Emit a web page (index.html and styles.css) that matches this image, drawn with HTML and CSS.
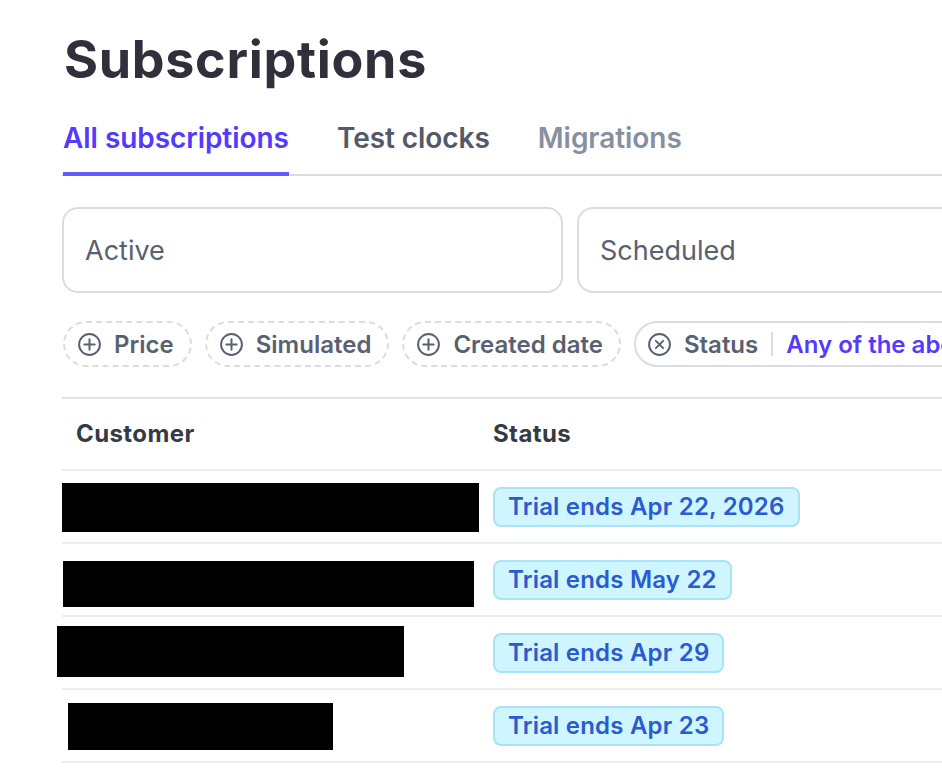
FILE: index.html
```html
<!DOCTYPE html>
<html>
<head>
<meta charset="utf-8">
<link rel="stylesheet" href="styles.css">
</head>
<body>
<div class="page">
  <h1 class="title">Subscriptions</h1>
  <nav class="tabs">
    <a class="tab active">All subscriptions</a>
    <a class="tab">Test clocks</a>
    <a class="tab muted">Migrations</a>
  </nav>
  <div class="cards">
    <div class="card">Active</div>
    <div class="card">Scheduled</div>
  </div>
  <div class="pills">
    <span class="pill dashed"><svg class="ico" viewBox="0 0 24 24"><circle cx="12" cy="12" r="10"/><path d="M12 7v10M7 12h10"/></svg>Price</span>
    <span class="pill dashed"><svg class="ico" viewBox="0 0 24 24"><circle cx="12" cy="12" r="10"/><path d="M12 7v10M7 12h10"/></svg>Simulated</span>
    <span class="pill dashed"><svg class="ico" viewBox="0 0 24 24"><circle cx="12" cy="12" r="10"/><path d="M12 7v10M7 12h10"/></svg>Created date</span>
    <span class="pill solid"><svg class="ico" viewBox="0 0 24 24"><circle cx="12" cy="12" r="10"/><path d="M8.5 8.5l7 7M15.5 8.5l-7 7"/></svg>Status<span class="sep"></span><span class="val">Any of the above</span></span>
  </div>
  <div class="table">
    <div class="row head">
      <div class="cell cust">Customer</div>
      <div class="cell stat">Status</div>
    </div>
    <div class="row">
      <div class="cell cust"><div class="redact" style="width:417px;height:49px;margin-left:-14px;margin-top:1px"></div></div>
      <div class="cell stat"><span class="badge">Trial ends Apr 22, 2026</span></div>
    </div>
    <div class="row">
      <div class="cell cust"><div class="redact" style="width:411px;height:46px;margin-left:-13px;margin-top:8px"></div></div>
      <div class="cell stat"><span class="badge">Trial ends May 22</span></div>
    </div>
    <div class="row">
      <div class="cell cust"><div class="redact" style="width:347px;height:51px;margin-left:-19px;margin-top:-2px"></div></div>
      <div class="cell stat"><span class="badge">Trial ends Apr 29</span></div>
    </div>
    <div class="row">
      <div class="cell cust"><div class="redact" style="width:265px;height:47px;margin-left:-8px;margin-top:2px"></div></div>
      <div class="cell stat"><span class="badge">Trial ends Apr 23</span></div>
    </div>
  </div>
</div>
</body>
</html>
```
FILE: styles.css
```css
* { box-sizing: border-box; }
html, body { margin: 0; padding: 0; background: #fff; }
body {
  font-family: Inter, "Noto Sans", sans-serif;
  overflow: hidden;
  width: 942px;
  height: 772px;
}
.page {
  padding: 28px 0 0 62px;
  width: 1300px;
}
.title {
  margin: 0;
  font-size: 52px;
  line-height: 64px;
  font-weight: 700;
  color: #2f303c;
  letter-spacing: 0.7px;
  padding-left: 2px;
}
.tabs {
  margin-top: 28px;
  display: flex;
  gap: 48px;
  border-bottom: 2px solid #d8dce2;
  padding-left: 1px;
}
.tab {
  font-size: 28px;
  line-height: 36px;
  font-weight: 600;
  letter-spacing: -0.05px;
  color: #545969;
  padding-bottom: 16px;
  border-bottom: 4px solid transparent;
  margin-bottom: -2px;
}
.tab.active {
  color: #533afd;
  border-bottom-color: #635bff;
}
.tab.muted { color: #87909f; }
.cards {
  margin-top: 31px;
  display: flex;
  gap: 14px;
}
.card {
  width: 501px;
  height: 86px;
  border: 2px solid #d8dde3;
  border-radius: 16px;
  display: flex;
  align-items: center;
  padding-left: 21px;
  font-size: 27px;
  color: #596171;
}
.pills {
  margin-top: 28px;
  display: flex;
  gap: 13px;
  padding-left: 1px;
}
.pill {
  height: 46px;
  border-radius: 23px;
  display: flex;
  align-items: center;
  padding: 0 16px 0 12px;
  font-size: 24px;
  font-weight: 600;
  color: #596171;
}
.pill.dashed { border: 2px dashed #d8dde3; }
.pill.solid { border: 2px solid #d8dde3; padding-left: 11px; padding-right: 40px; }
.ico {
  width: 25px;
  height: 25px;
  margin-right: 12px;
  fill: none;
  stroke: #596171;
  stroke-width: 1.9;
  stroke-linecap: round;
}
.sep {
  width: 2px;
  height: 24px;
  background: #d8dde3;
  margin: 0 13px;
}
.val { color: #533afd; }
.table {
  margin-top: 30px;
  border-top: 2px solid #dfe3e8;
}
.row {
  display: flex;
  height: 73px;
  border-bottom: 2px solid #ebeef1;
  align-items: center;
}
.row.head { height: 72px; padding-bottom: 2px; }
.cell.cust { width: 431px; padding-left: 14px; }
.cell.stat { flex: 1; }
.head .cell {
  font-size: 24px;
  font-weight: 700;
  letter-spacing: 0.4px;
  color: #353a44;
}
.redact { background: #000; }
.badge {
  display: inline-block;
  height: 40px;
  line-height: 36px;
  padding: 0 13px;
  border: 2px solid #a7e3f9;
  background: #cff5fe;
  border-radius: 8px;
  color: #2b5bd0;
  font-size: 24px;
  font-weight: 600;
  letter-spacing: 0.2px;
}
```
